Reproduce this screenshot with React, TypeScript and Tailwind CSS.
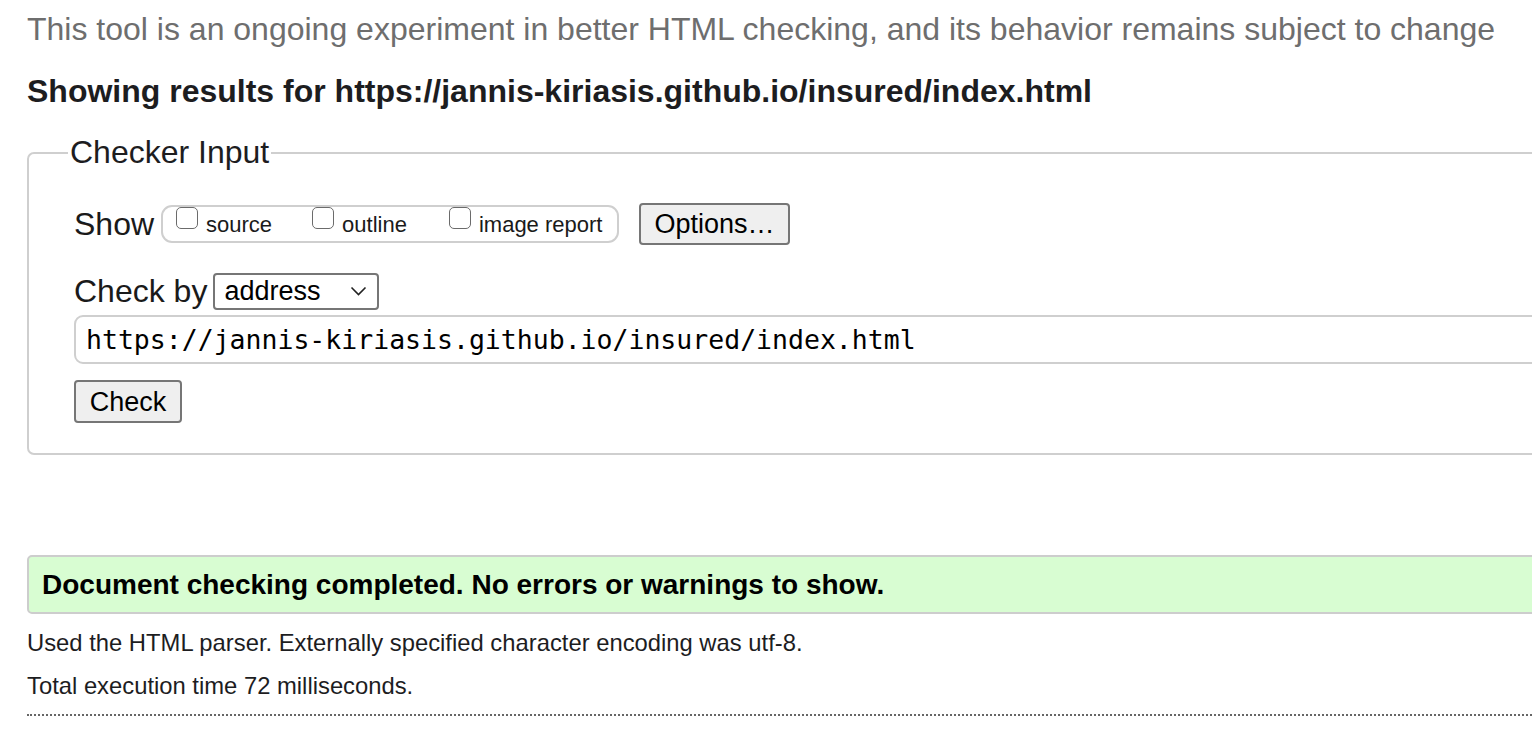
import React from "react";

function Checkbox() {
  return (
    <span className="inline-block w-[22px] h-[22px] rounded-[5px] border border-[#6b6b6b] bg-white" />
  );
}

export default function App() {
  return (
    <div className="w-[1532px] h-[742px] overflow-hidden bg-white font-['Liberation_Sans',Arial,sans-serif] text-[#1a1a1a]">
      <div className="pl-[27px] w-[1620px]">
        <div className="h-[60px] pt-[10px] text-[32px] leading-[38px] text-[#6e6e6e] whitespace-nowrap">
          This tool is an ongoing experiment in better HTML checking, and its behavior remains subject to change
        </div>
        <div className="h-[60px] pt-[12px] text-[32px] leading-[38px] font-bold text-[#1d1d1f] whitespace-nowrap">
          Showing results for https://jannis-kiriasis.github.io/insured/index.html
        </div>
        <div className="relative mt-[32px] h-[303px] border-2 border-[#cfcfcf] rounded-[7px]">
          <div className="absolute left-[39px] top-[-21px] bg-white px-[2px] text-[32px] leading-[38px] text-[#1d1d1f]">
            Checker Input
          </div>
          <div className="pl-[45px] pt-[49px]">
            <div className="flex items-center h-[42px]">
              <span className="text-[32px] leading-[38px] mr-[7px]">Show</span>
              <div className="flex items-start h-[38px] w-[458px] border-2 border-[#cfcfcf] rounded-[11px] pl-[13px] text-[22px] leading-[26px]">
                <Checkbox />
                <span className="ml-[8px] mt-[5px]">source</span>
                <span className="ml-[40px]"><Checkbox /></span>
                <span className="ml-[8px] mt-[5px]">outline</span>
                <span className="ml-[42px]"><Checkbox /></span>
                <span className="ml-[8px] mt-[5px]">image report</span>
              </div>
              <button className="ml-[20px] h-[42px] w-[151px] bg-[#efefef] border-2 border-[#767676] rounded-[4px] text-[27px] leading-[36px] text-black">
                Options…
              </button>
            </div>
            <div className="flex items-center mt-[27px] h-[38px]">
              <span className="text-[32px] leading-[38px] mr-[6px]">Check by</span>
              <div className="flex items-center justify-between h-[37px] w-[166px] border-2 border-[#767676] rounded-[4px] pl-[9px] pr-[10px] text-[27px] text-black">
                <span className="leading-[30px]">address</span>
                <svg width="17" height="10" viewBox="0 0 17 10" fill="none">
                  <path d="M1.5 1.5 L8.5 8.5 L15.5 1.5" stroke="#222" strokeWidth="1.6" />
                </svg>
              </div>
            </div>
            <div className="mt-[5px] h-[49px] border-2 border-[#cfcfcf] rounded-[9px] flex items-center pl-[10px] font-['DejaVu_Sans_Mono',monospace] text-[26.5px] text-black">
              https://jannis-kiriasis.github.io/insured/index.html
            </div>
            <button className="mt-[16px] h-[43px] w-[108px] bg-[#efefef] border-2 border-[#767676] rounded-[4px] text-[27px] leading-[36px] text-black">
              Check
            </button>
          </div>
        </div>
        <div className="mt-[100px] h-[59px] bg-[#d8fdd2] border-2 border-[#cdcdcd] rounded-[5px] flex items-center pl-[13px] text-[28px] font-bold text-black">
          Document checking completed. No errors or warnings to show.
        </div>
        <div className="mt-[14px] text-[23.8px] leading-[30px] text-[#1d1d1f]">
          Used the HTML parser. Externally specified character encoding was utf-8.
        </div>
        <div className="mt-[13px] text-[23.8px] leading-[30px] text-[#1d1d1f]">
          Total execution time 72 milliseconds.
        </div>
        <div className="mt-[13px] border-t-[2px] border-dotted border-[#666]" />
      </div>
    </div>
  );
}
